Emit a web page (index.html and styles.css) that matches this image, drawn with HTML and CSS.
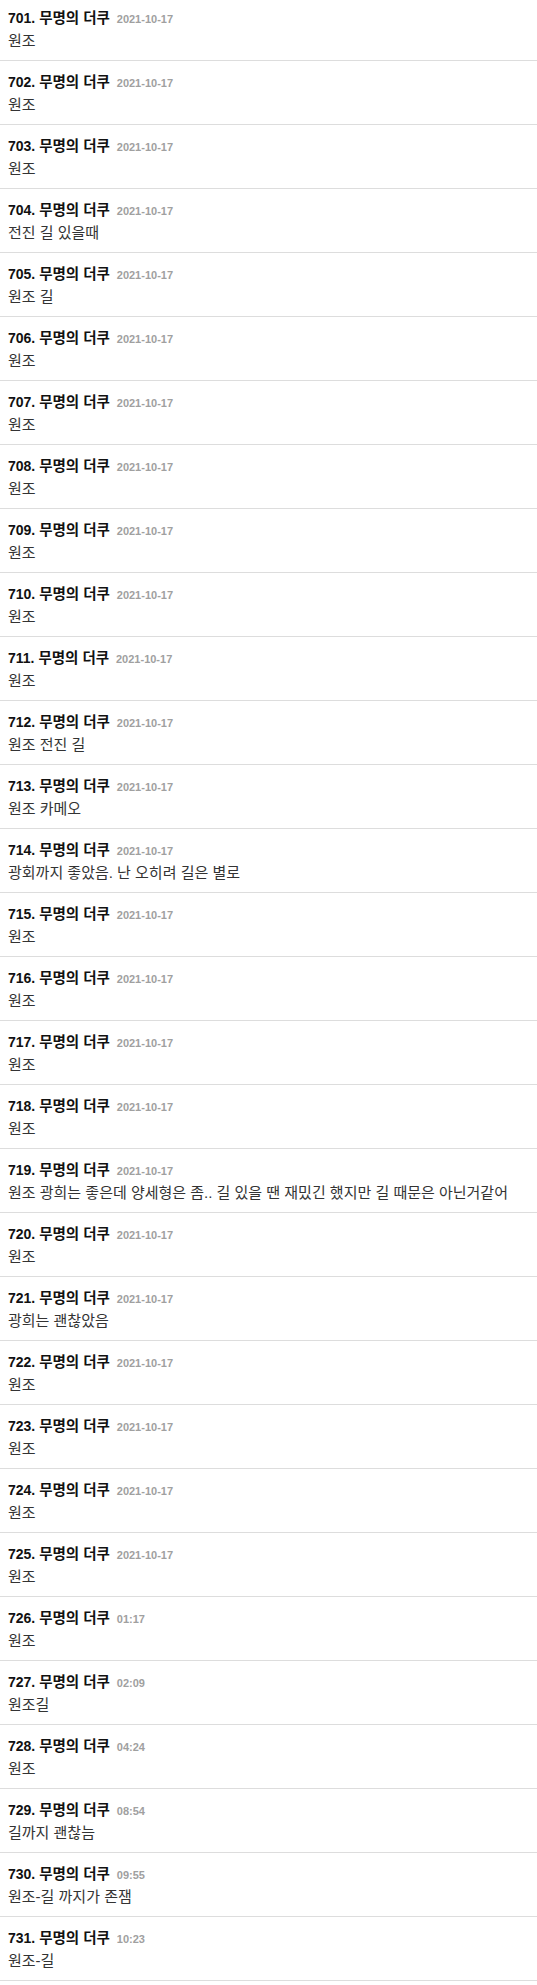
FILE: index.html
```html
<!DOCTYPE html>
<html lang="ko">

<head>
    <meta charset="UTF-8">
    <meta name="viewport" content="width=device-width, initial-scale=1.0">
    <title>댓글 목록</title>
    <link rel="stylesheet" href="styles.css">
</head>

<body>
    <ul class="comment-list">
        <li class="comment"><div class="comment-head"><span class="num">701.</span> <span class="nick">무명의 더쿠</span> <span class="date">2021-10-17</span></div><div class="comment-body">원조</div></li>
        <li class="comment"><div class="comment-head"><span class="num">702.</span> <span class="nick">무명의 더쿠</span> <span class="date">2021-10-17</span></div><div class="comment-body">원조</div></li>
        <li class="comment"><div class="comment-head"><span class="num">703.</span> <span class="nick">무명의 더쿠</span> <span class="date">2021-10-17</span></div><div class="comment-body">원조</div></li>
        <li class="comment"><div class="comment-head"><span class="num">704.</span> <span class="nick">무명의 더쿠</span> <span class="date">2021-10-17</span></div><div class="comment-body">전진 길 있을때</div></li>
        <li class="comment"><div class="comment-head"><span class="num">705.</span> <span class="nick">무명의 더쿠</span> <span class="date">2021-10-17</span></div><div class="comment-body">원조 길</div></li>
        <li class="comment"><div class="comment-head"><span class="num">706.</span> <span class="nick">무명의 더쿠</span> <span class="date">2021-10-17</span></div><div class="comment-body">원조</div></li>
        <li class="comment"><div class="comment-head"><span class="num">707.</span> <span class="nick">무명의 더쿠</span> <span class="date">2021-10-17</span></div><div class="comment-body">원조</div></li>
        <li class="comment"><div class="comment-head"><span class="num">708.</span> <span class="nick">무명의 더쿠</span> <span class="date">2021-10-17</span></div><div class="comment-body">원조</div></li>
        <li class="comment"><div class="comment-head"><span class="num">709.</span> <span class="nick">무명의 더쿠</span> <span class="date">2021-10-17</span></div><div class="comment-body">원조</div></li>
        <li class="comment"><div class="comment-head"><span class="num">710.</span> <span class="nick">무명의 더쿠</span> <span class="date">2021-10-17</span></div><div class="comment-body">원조</div></li>
        <li class="comment"><div class="comment-head"><span class="num">711.</span> <span class="nick">무명의 더쿠</span> <span class="date">2021-10-17</span></div><div class="comment-body">원조</div></li>
        <li class="comment"><div class="comment-head"><span class="num">712.</span> <span class="nick">무명의 더쿠</span> <span class="date">2021-10-17</span></div><div class="comment-body">원조 전진 길</div></li>
        <li class="comment"><div class="comment-head"><span class="num">713.</span> <span class="nick">무명의 더쿠</span> <span class="date">2021-10-17</span></div><div class="comment-body">원조 카메오</div></li>
        <li class="comment"><div class="comment-head"><span class="num">714.</span> <span class="nick">무명의 더쿠</span> <span class="date">2021-10-17</span></div><div class="comment-body">광회까지 좋았음. 난 오히려 길은 별로</div></li>
        <li class="comment"><div class="comment-head"><span class="num">715.</span> <span class="nick">무명의 더쿠</span> <span class="date">2021-10-17</span></div><div class="comment-body">원조</div></li>
        <li class="comment"><div class="comment-head"><span class="num">716.</span> <span class="nick">무명의 더쿠</span> <span class="date">2021-10-17</span></div><div class="comment-body">원조</div></li>
        <li class="comment"><div class="comment-head"><span class="num">717.</span> <span class="nick">무명의 더쿠</span> <span class="date">2021-10-17</span></div><div class="comment-body">원조</div></li>
        <li class="comment"><div class="comment-head"><span class="num">718.</span> <span class="nick">무명의 더쿠</span> <span class="date">2021-10-17</span></div><div class="comment-body">원조</div></li>
        <li class="comment"><div class="comment-head"><span class="num">719.</span> <span class="nick">무명의 더쿠</span> <span class="date">2021-10-17</span></div><div class="comment-body">원조 광희는 좋은데 양세형은 좀.. 길 있을 땐 재밌긴 했지만 길 때문은 아닌거같어</div></li>
        <li class="comment"><div class="comment-head"><span class="num">720.</span> <span class="nick">무명의 더쿠</span> <span class="date">2021-10-17</span></div><div class="comment-body">원조</div></li>
        <li class="comment"><div class="comment-head"><span class="num">721.</span> <span class="nick">무명의 더쿠</span> <span class="date">2021-10-17</span></div><div class="comment-body">광희는 괜찮았음</div></li>
        <li class="comment"><div class="comment-head"><span class="num">722.</span> <span class="nick">무명의 더쿠</span> <span class="date">2021-10-17</span></div><div class="comment-body">원조</div></li>
        <li class="comment"><div class="comment-head"><span class="num">723.</span> <span class="nick">무명의 더쿠</span> <span class="date">2021-10-17</span></div><div class="comment-body">원조</div></li>
        <li class="comment"><div class="comment-head"><span class="num">724.</span> <span class="nick">무명의 더쿠</span> <span class="date">2021-10-17</span></div><div class="comment-body">원조</div></li>
        <li class="comment"><div class="comment-head"><span class="num">725.</span> <span class="nick">무명의 더쿠</span> <span class="date">2021-10-17</span></div><div class="comment-body">원조</div></li>
        <li class="comment"><div class="comment-head"><span class="num">726.</span> <span class="nick">무명의 더쿠</span> <span class="date">01:17</span></div><div class="comment-body">원조</div></li>
        <li class="comment"><div class="comment-head"><span class="num">727.</span> <span class="nick">무명의 더쿠</span> <span class="date">02:09</span></div><div class="comment-body">원조길</div></li>
        <li class="comment"><div class="comment-head"><span class="num">728.</span> <span class="nick">무명의 더쿠</span> <span class="date">04:24</span></div><div class="comment-body">원조</div></li>
        <li class="comment"><div class="comment-head"><span class="num">729.</span> <span class="nick">무명의 더쿠</span> <span class="date">08:54</span></div><div class="comment-body">길까지 괜찮늠</div></li>
        <li class="comment"><div class="comment-head"><span class="num">730.</span> <span class="nick">무명의 더쿠</span> <span class="date">09:55</span></div><div class="comment-body">원조-길 까지가 존잼</div></li>
        <li class="comment"><div class="comment-head"><span class="num">731.</span> <span class="nick">무명의 더쿠</span> <span class="date">10:23</span></div><div class="comment-body">원조-길</div></li>
    </ul>
</body>

</html>
```

FILE: styles.css
```css
/* Reset */
* {
    margin: 0;
    padding: 0;
    box-sizing: border-box;
}

body {
    font-family: 'Liberation Sans', 'Noto Sans CJK KR', sans-serif;
    color: #333;
    background-color: #fff;
}

.comment-list {
    list-style: none;
    margin-top: -3px;
}

.comment {
    height: 64px;
    padding: 10px 8px 0;
    border-bottom: 1px solid #ddd;
}

.comment-head {
    font-size: 14px;
    line-height: 22px;
    font-weight: bold;
    color: #111;
}

.nick {
    font-size: 14.5px;
}

.date {
    margin-left: 3px;
    font-size: 11px;
    color: #a0a0a0;
}

.comment-body {
    font-size: 15px;
    line-height: 22px;
    color: #333;
}
```
